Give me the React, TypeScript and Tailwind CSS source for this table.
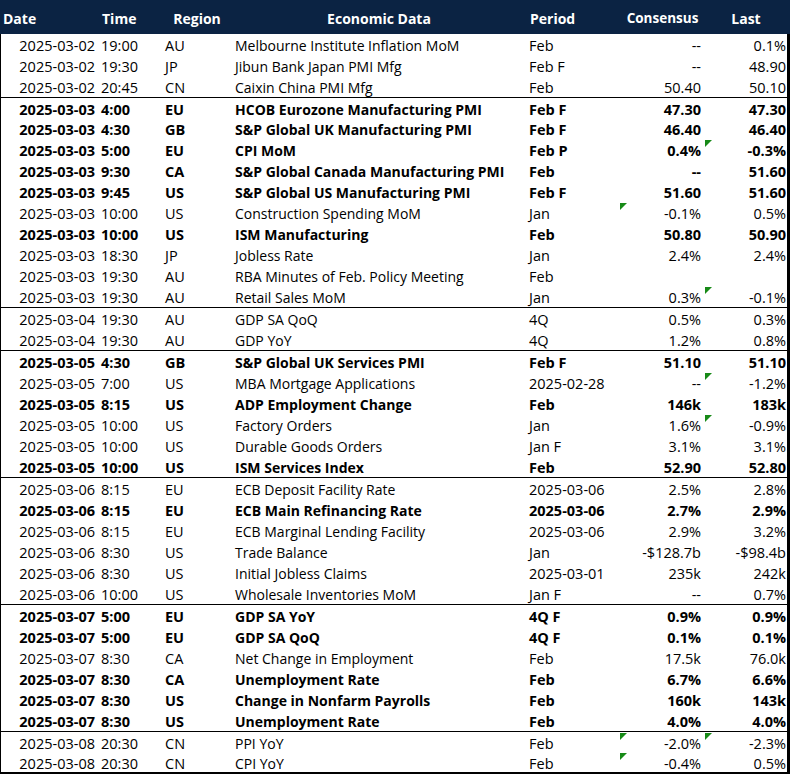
const rows: {
  d: string; t: string; r: string; n: string; p: string; c: string; l: string;
  b?: boolean; g?: boolean; tc?: boolean; tl?: boolean;
}[] = [
  { d: "2025-03-02", t: "19:00", r: "AU", n: "Melbourne Institute Inflation MoM", p: "Feb", c: "--", l: "0.1%" },
  { d: "2025-03-02", t: "19:30", r: "JP", n: "Jibun Bank Japan PMI Mfg", p: "Feb F", c: "--", l: "48.90" },
  { d: "2025-03-02", t: "20:45", r: "CN", n: "Caixin China PMI Mfg", p: "Feb", c: "50.40", l: "50.10" },
  { d: "2025-03-03", t: "4:00", r: "EU", n: "HCOB Eurozone Manufacturing PMI", p: "Feb F", c: "47.30", l: "47.30", b: true, g: true },
  { d: "2025-03-03", t: "4:30", r: "GB", n: "S&P Global UK Manufacturing PMI", p: "Feb F", c: "46.40", l: "46.40", b: true },
  { d: "2025-03-03", t: "5:00", r: "EU", n: "CPI MoM", p: "Feb P", c: "0.4%", l: "-0.3%", b: true, tl: true },
  { d: "2025-03-03", t: "9:30", r: "CA", n: "S&P Global Canada Manufacturing PMI", p: "Feb", c: "--", l: "51.60", b: true },
  { d: "2025-03-03", t: "9:45", r: "US", n: "S&P Global US Manufacturing PMI", p: "Feb F", c: "51.60", l: "51.60", b: true },
  { d: "2025-03-03", t: "10:00", r: "US", n: "Construction Spending MoM", p: "Jan", c: "-0.1%", l: "0.5%", tc: true },
  { d: "2025-03-03", t: "10:00", r: "US", n: "ISM Manufacturing", p: "Feb", c: "50.80", l: "50.90", b: true },
  { d: "2025-03-03", t: "18:30", r: "JP", n: "Jobless Rate", p: "Jan", c: "2.4%", l: "2.4%" },
  { d: "2025-03-03", t: "19:30", r: "AU", n: "RBA Minutes of Feb. Policy Meeting", p: "Feb", c: "", l: "" },
  { d: "2025-03-03", t: "19:30", r: "AU", n: "Retail Sales MoM", p: "Jan", c: "0.3%", l: "-0.1%", tl: true },
  { d: "2025-03-04", t: "19:30", r: "AU", n: "GDP SA QoQ", p: "4Q", c: "0.5%", l: "0.3%", g: true },
  { d: "2025-03-04", t: "19:30", r: "AU", n: "GDP YoY", p: "4Q", c: "1.2%", l: "0.8%" },
  { d: "2025-03-05", t: "4:30", r: "GB", n: "S&P Global UK Services PMI", p: "Feb F", c: "51.10", l: "51.10", b: true, g: true },
  { d: "2025-03-05", t: "7:00", r: "US", n: "MBA Mortgage Applications", p: "2025-02-28", c: "--", l: "-1.2%", tl: true },
  { d: "2025-03-05", t: "8:15", r: "US", n: "ADP Employment Change", p: "Feb", c: "146k", l: "183k", b: true },
  { d: "2025-03-05", t: "10:00", r: "US", n: "Factory Orders", p: "Jan", c: "1.6%", l: "-0.9%", tl: true },
  { d: "2025-03-05", t: "10:00", r: "US", n: "Durable Goods Orders", p: "Jan F", c: "3.1%", l: "3.1%" },
  { d: "2025-03-05", t: "10:00", r: "US", n: "ISM Services Index", p: "Feb", c: "52.90", l: "52.80", b: true },
  { d: "2025-03-06", t: "8:15", r: "EU", n: "ECB Deposit Facility Rate", p: "2025-03-06", c: "2.5%", l: "2.8%", g: true },
  { d: "2025-03-06", t: "8:15", r: "EU", n: "ECB Main Refinancing Rate", p: "2025-03-06", c: "2.7%", l: "2.9%", b: true },
  { d: "2025-03-06", t: "8:15", r: "EU", n: "ECB Marginal Lending Facility", p: "2025-03-06", c: "2.9%", l: "3.2%" },
  { d: "2025-03-06", t: "8:30", r: "US", n: "Trade Balance", p: "Jan", c: "-$128.7b", l: "-$98.4b" },
  { d: "2025-03-06", t: "8:30", r: "US", n: "Initial Jobless Claims", p: "2025-03-01", c: "235k", l: "242k" },
  { d: "2025-03-06", t: "10:00", r: "US", n: "Wholesale Inventories MoM", p: "Jan F", c: "--", l: "0.7%" },
  { d: "2025-03-07", t: "5:00", r: "EU", n: "GDP SA YoY", p: "4Q F", c: "0.9%", l: "0.9%", b: true, g: true },
  { d: "2025-03-07", t: "5:00", r: "EU", n: "GDP SA QoQ", p: "4Q F", c: "0.1%", l: "0.1%", b: true },
  { d: "2025-03-07", t: "8:30", r: "CA", n: "Net Change in Employment", p: "Feb", c: "17.5k", l: "76.0k" },
  { d: "2025-03-07", t: "8:30", r: "CA", n: "Unemployment Rate", p: "Feb", c: "6.7%", l: "6.6%", b: true },
  { d: "2025-03-07", t: "8:30", r: "US", n: "Change in Nonfarm Payrolls", p: "Feb", c: "160k", l: "143k", b: true },
  { d: "2025-03-07", t: "8:30", r: "US", n: "Unemployment Rate", p: "Feb", c: "4.0%", l: "4.0%", b: true },
  { d: "2025-03-08", t: "20:30", r: "CN", n: "PPI YoY", p: "Feb", c: "-2.0%", l: "-2.3%", g: true, tc: true, tl: true },
  { d: "2025-03-08", t: "20:30", r: "CN", n: "CPI YoY", p: "Feb", c: "-0.4%", l: "0.5%", tc: true },
];

// excel "number stored as text" marker
function Flag() {
  return (
    <svg width="7" height="7" viewBox="0 0 7 7" className="absolute left-0 top-[1px]">
      <polygon points="0,0 7,0 0,7" fill="#178a17" />
    </svg>
  );
}

export default function App() {
  return (
    <div
      className="w-[790px] h-[774px] bg-white text-black text-[14.5px] overflow-hidden"
      style={{ fontFamily: '"Open Sans", "Noto Sans", sans-serif' }}
    >
      <div className="flex h-[34px] items-center pt-[2px] bg-[#0b2343] text-white font-bold text-[14px]">
        <div className="w-[98px] pl-[3px]">Date</div>
        <div className="w-[64px] pl-[4px]">Time</div>
        <div className="w-[70px] text-center">Region</div>
        <div className="w-[294px] text-center">Economic Data</div>
        <div className="w-[94px] pl-[4px]">Period</div>
        <div className="w-[85px] text-center text-[13.5px]">Consensus</div>
        <div className="w-[82px] text-center">Last</div>
      </div>
      <div className="border-l border-r-[3px] border-b-2 border-black w-[790px]">
        {rows.map((x, i) => {
          const first = i === 3;
          const last = i >= rows.length - 2;
          return (
            <div
              key={i}
              className={`flex whitespace-nowrap leading-[24px] box-content ${last ? "h-[20px]" : "h-[21px]"} ${
                x.g ? (first ? "border-t border-black !h-[20px]" : "border-t border-black") : ""
              } ${x.b ? "font-bold" : ""}`}
            >
              <div className="w-[97px] pr-[3px] text-right">{x.d}</div>
              <div className="w-[64px] pl-[3px]">{x.t}</div>
              <div className="w-[70px] pl-[3px]">{x.r}</div>
              <div className="w-[294px] pl-[3px] text-[14px]">{x.n}</div>
              <div className="w-[94px] pl-[3px]">{x.p}</div>
              <div className="relative w-[85px] pr-[4px] text-right">
                {x.tc && <Flag />}
                {x.c}
              </div>
              <div className="relative w-[82px] pr-[1px] text-right">
                {x.tl && <Flag />}
                {x.l}
              </div>
            </div>
          );
        })}
      </div>
    </div>
  );
}
